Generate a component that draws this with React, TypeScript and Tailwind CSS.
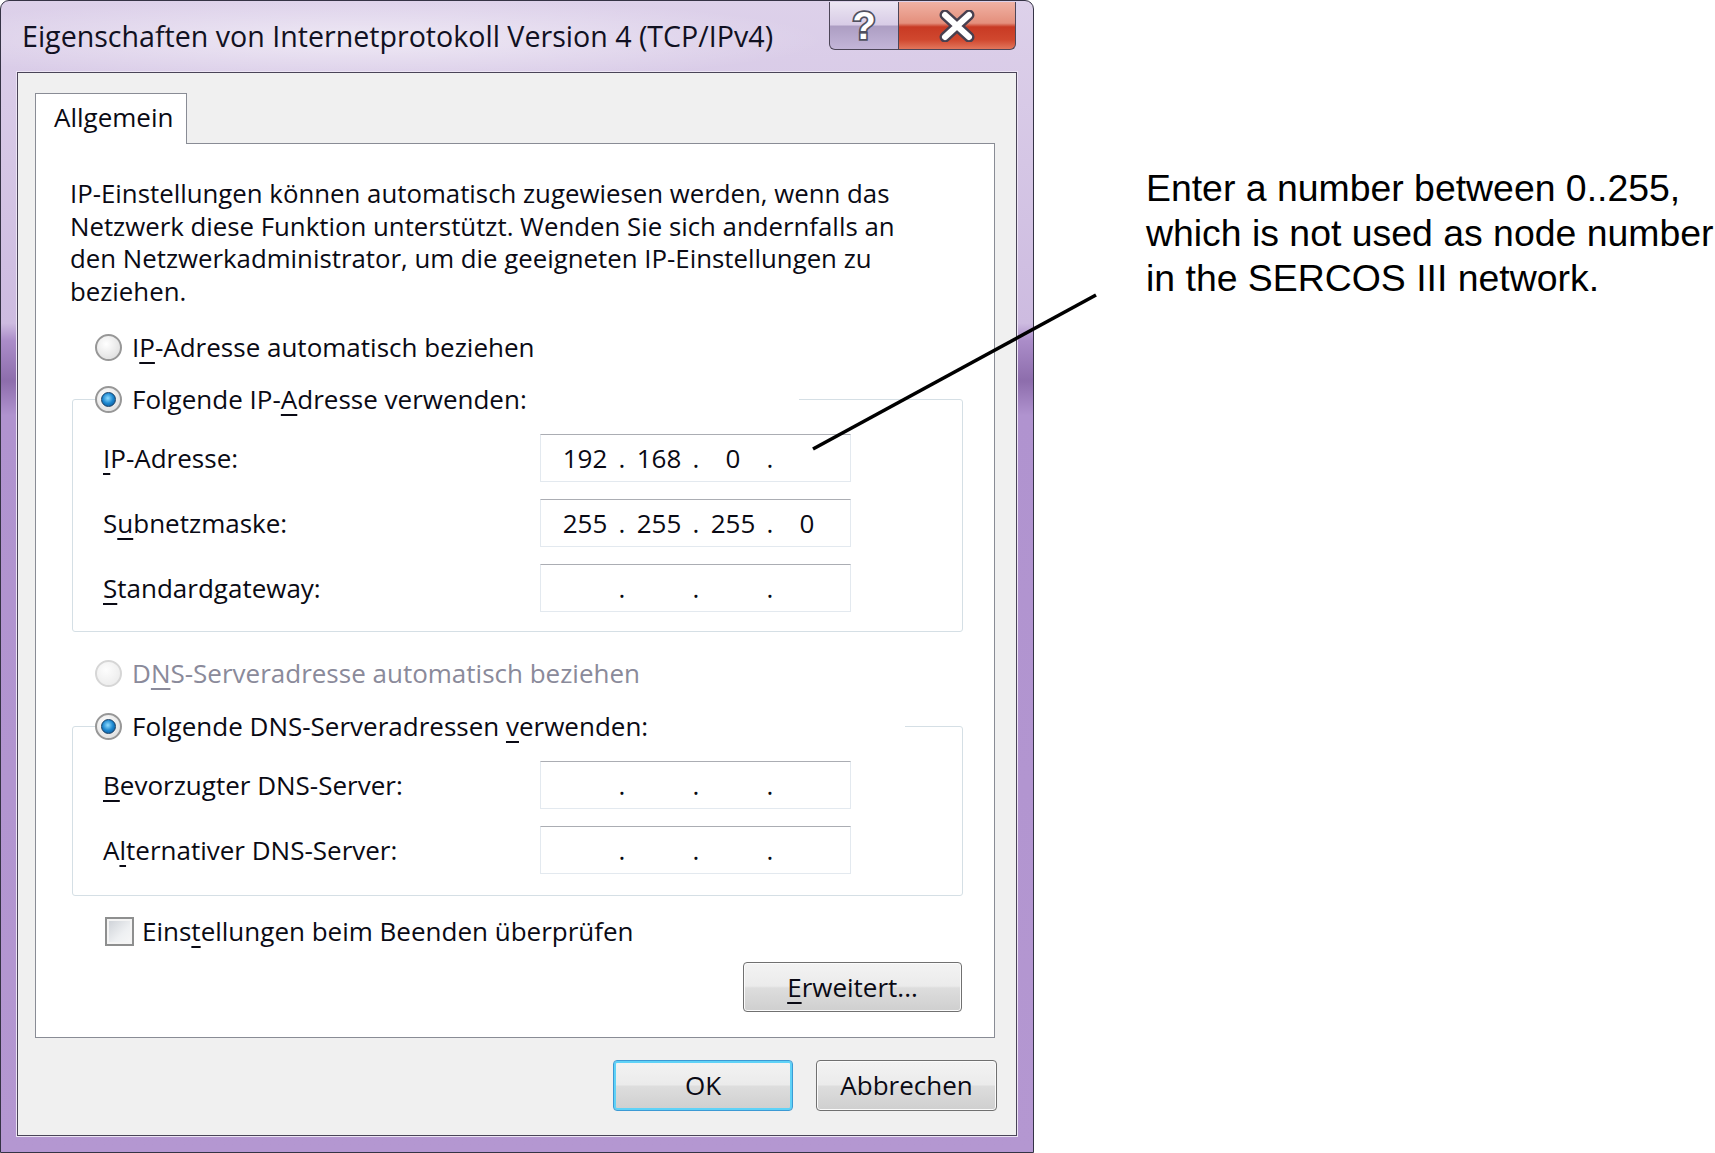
import React, { Fragment } from 'react';

const font = "font-['Open_Sans','Noto_Sans',sans-serif]";

function Radio({ checked, disabled }: { checked?: boolean; disabled?: boolean }) {
  return (
    <span
      className={`flex h-[27px] w-[27px] shrink-0 items-center justify-center rounded-full border-2 ${
        disabled
          ? 'border-[#d6d6d6] bg-[radial-gradient(circle_at_40%_35%,#fdfdfd,#e8e8e8)]'
          : 'border-[#979797] bg-[radial-gradient(circle_at_40%_35%,#ffffff,#d8d8d8)]'
      }`}
    >
      {checked && (
        <span className="h-[15px] w-[15px] rounded-full border border-[#163f66] bg-[radial-gradient(circle_at_45%_40%,#8fdcff,#1b86cf_50%,#0b4a86)]" />
      )}
    </span>
  );
}

function IpField({ parts }: { parts: string[] }) {
  return (
    <div className="flex h-[48px] w-[311px] items-center border border-[#e3e9ef] border-t-[#abadb3] bg-white pl-[11px]">
      {parts.map((p, i) => (
        <Fragment key={i}>
          <span className="w-[66px] text-center">{p}</span>
          {i < 3 && <span className="w-[8px] text-center">.</span>}
        </Fragment>
      ))}
    </div>
  );
}

function Row({ label, parts }: { label: React.ReactNode; parts: string[] }) {
  return (
    <div className="flex items-center">
      <div className="w-[437px] whitespace-nowrap">{label}</div>
      <IpField parts={parts} />
    </div>
  );
}

function WinButton({ children, primary, className = '' }: { children: React.ReactNode; primary?: boolean; className?: string }) {
  return (
    <button
      className={`flex items-center justify-center rounded-[4px] border bg-[linear-gradient(180deg,#f3f3f3_0%,#ebebeb_48%,#dddddd_52%,#cfcfcf_100%)] ${
        primary
          ? 'border-[#3c9ad4] shadow-[inset_0_0_0_2px_#5fd2f7]'
          : 'border-[#707070] shadow-[inset_0_0_0_1px_#fbfbfb]'
      } ${className}`}
    >
      {children}
    </button>
  );
}

const U = ({ children }: { children: React.ReactNode }) => (
  <u className="decoration-[2px] underline-offset-[5px]">{children}</u>
);

export default function App() {
  return (
    <div className={`relative flex h-[1153px] w-[1715px] overflow-hidden bg-white ${font} text-[26px] text-[#0a0a14]`}>
      {/* dialog window */}
      <div className="flex h-[1153px] w-[1034px] shrink-0 flex-col rounded-t-[9px] border border-[#353345] bg-[linear-gradient(180deg,#ddd1ea_0%,#cdbbe0_28%,#ab8dc9_29.5%,#8d6dac_33%,#b093cf_36%,#b497d1_100%)]">
        {/* title bar */}
        <div className="flex h-[71px] items-start justify-between rounded-t-[8px] bg-[radial-gradient(ellipse_45%_60%_at_35%_55%,rgba(255,255,255,0.55),rgba(255,255,255,0)_100%)]">
          <div className="mt-[16px] ml-[21px] whitespace-nowrap text-[28.6px] leading-[38px] text-[#111122]">
            Eigenschaften von Internetprotokoll Version 4 (TCP/IPv4)
          </div>
          <div className="mr-[17px] mt-[1px] flex h-[48px]">
            <div className="flex w-[70px] items-center justify-center rounded-bl-[6px] border border-t-0 border-[#4d4658] bg-[linear-gradient(180deg,#ece6f3_0%,#d8cce6_48%,#ad9ec3_52%,#c3b5d8_100%)]">
              <svg width="34" height="42" viewBox="0 0 34 42">
                <text x="17" y="34" textAnchor="middle" fontFamily="Liberation Sans, Arial, sans-serif" fontWeight="bold" fontSize="38" fill="#ffffff" stroke="#50505e" strokeWidth="3.5" paintOrder="stroke">?</text>
              </svg>
            </div>
            <div className="flex w-[117px] items-center justify-center rounded-br-[6px] border border-l-0 border-t-0 border-[#4d4658] bg-[linear-gradient(180deg,#f0b2a4_0%,#e48f7c_45%,#c83a24_53%,#d0472e_80%,#e2765c_100%)]">
              <svg width="42" height="32" viewBox="0 0 42 32">
                <path d="M9 5 L33 27 M33 5 L9 27" stroke="#474050" strokeWidth="11" strokeLinecap="round" />
                <path d="M9 5 L33 27 M33 5 L9 27" stroke="#ffffff" strokeWidth="6" strokeLinecap="round" />
              </svg>
            </div>
          </div>
        </div>

        {/* client area */}
        <div className="mx-[16px] mb-[16px] flex flex-1 flex-col border border-[#4a4458] bg-[#f0f0f0] shadow-[0_0_0_1px_#ece4f4]">
          <div className="ml-[17px] mr-[21px] mt-[20px] flex flex-col">
            <div className="flex">
              <div className="relative z-10 -mb-px flex h-[51px] w-[152px] items-center border border-b-0 border-[#898c95] bg-white pb-[4px] pl-[18px]">
                Allgemein
              </div>
            </div>
            <div className="flex flex-col border border-[#898c95] bg-white">
              <p className="ml-[34px] mt-[33px] whitespace-nowrap text-[25.8px] leading-[32.6px]">
                IP-Einstellungen können automatisch zugewiesen werden, wenn das
                <br />
                Netzwerk diese Funktion unterstützt. Wenden Sie sich andernfalls an
                <br />
                den Netzwerkadministrator, um die geeigneten IP-Einstellungen zu
                <br />
                beziehen.
              </p>

              <div className="ml-[59px] mt-[22px] flex h-[36px] items-center gap-[10px] whitespace-nowrap">
                <Radio />
                <span>
                  I<U>P</U>-Adresse automatisch beziehen
                </span>
              </div>

              <fieldset className="ml-[36px] mt-[16px] w-[891px] rounded-[3px] border border-[#d5dfe5] pb-[19px] pl-[30px] pt-[17px]">
                <legend className="ml-[-8px] flex h-[36px] w-[704px] items-center gap-[10px] whitespace-nowrap">
                  <Radio checked />
                  <span>
                    Folgende IP-<U>A</U>dresse verwenden:
                  </span>
                </legend>
                <div className="flex flex-col gap-[17px]">
                  <Row label={<><U>I</U>P-Adresse:</>} parts={['192', '168', '0', '']} />
                  <Row label={<>S<U>u</U>bnetzmaske:</>} parts={['255', '255', '255', '0']} />
                  <Row label={<><U>S</U>tandardgateway:</>} parts={['', '', '', '']} />
                </div>
              </fieldset>

              <div className="ml-[59px] mt-[23px] flex h-[36px] items-center gap-[10px] whitespace-nowrap text-[#8a8a9a]">
                <Radio disabled />
                <span>
                  D<U>N</U>S-Serveradresse automatisch beziehen
                </span>
              </div>

              <fieldset className="ml-[36px] mt-[17px] w-[891px] rounded-[3px] border border-[#d5dfe5] pb-[21px] pl-[30px] pt-[17px]">
                <legend className="ml-[-8px] flex h-[36px] w-[810px] items-center gap-[10px] whitespace-nowrap">
                  <Radio checked />
                  <span>
                    Folgende DNS-Serveradressen <U>v</U>erwenden:
                  </span>
                </legend>
                <div className="flex flex-col gap-[17px]">
                  <Row label={<><U>B</U>evorzugter DNS-Server:</>} parts={['', '', '', '']} />
                  <Row label={<>A<U>l</U>ternativer DNS-Server:</>} parts={['', '', '', '']} />
                </div>
              </fieldset>

              <div className="ml-[69px] mt-[17px] flex h-[36px] items-center gap-[8px] whitespace-nowrap">
                <span className="h-[29px] w-[29px] shrink-0 border-2 border-[#8e8f8f] bg-[linear-gradient(135deg,#cbcfd5_0%,#eef0f2_60%,#f8f8f8_100%)] shadow-[inset_0_0_0_2px_#f4f4f4]" />
                <span>
                  Eins<U>t</U>ellungen beim Beenden überprüfen
                </span>
              </div>

              <div className="mb-[25px] mr-[32px] mt-[13px] flex justify-end">
                <WinButton className="h-[50px] w-[219px]">
                  <span>
                    <U>E</U>rweitert...
                  </span>
                </WinButton>
              </div>
            </div>
          </div>

          <div className="mr-[19px] mt-[22px] flex justify-end gap-[23px]">
            <WinButton primary className="h-[51px] w-[180px]">
              OK
            </WinButton>
            <WinButton className="h-[51px] w-[181px]">Abbrechen</WinButton>
          </div>
        </div>
      </div>

      {/* annotation */}
      <div className="ml-[112px] mt-[166px] whitespace-nowrap font-['Liberation_Sans',Arial,sans-serif] text-[37.4px] leading-[45px] text-black">
        Enter a number between 0..255,
        <br />
        which is not used as node number
        <br />
        in the SERCOS III network.
      </div>

      <svg className="pointer-events-none absolute left-0 top-0" width="1715" height="1153">
        <line x1="1096" y1="295" x2="813" y2="449" stroke="#000" strokeWidth="3.6" />
      </svg>
    </div>
  );
}
